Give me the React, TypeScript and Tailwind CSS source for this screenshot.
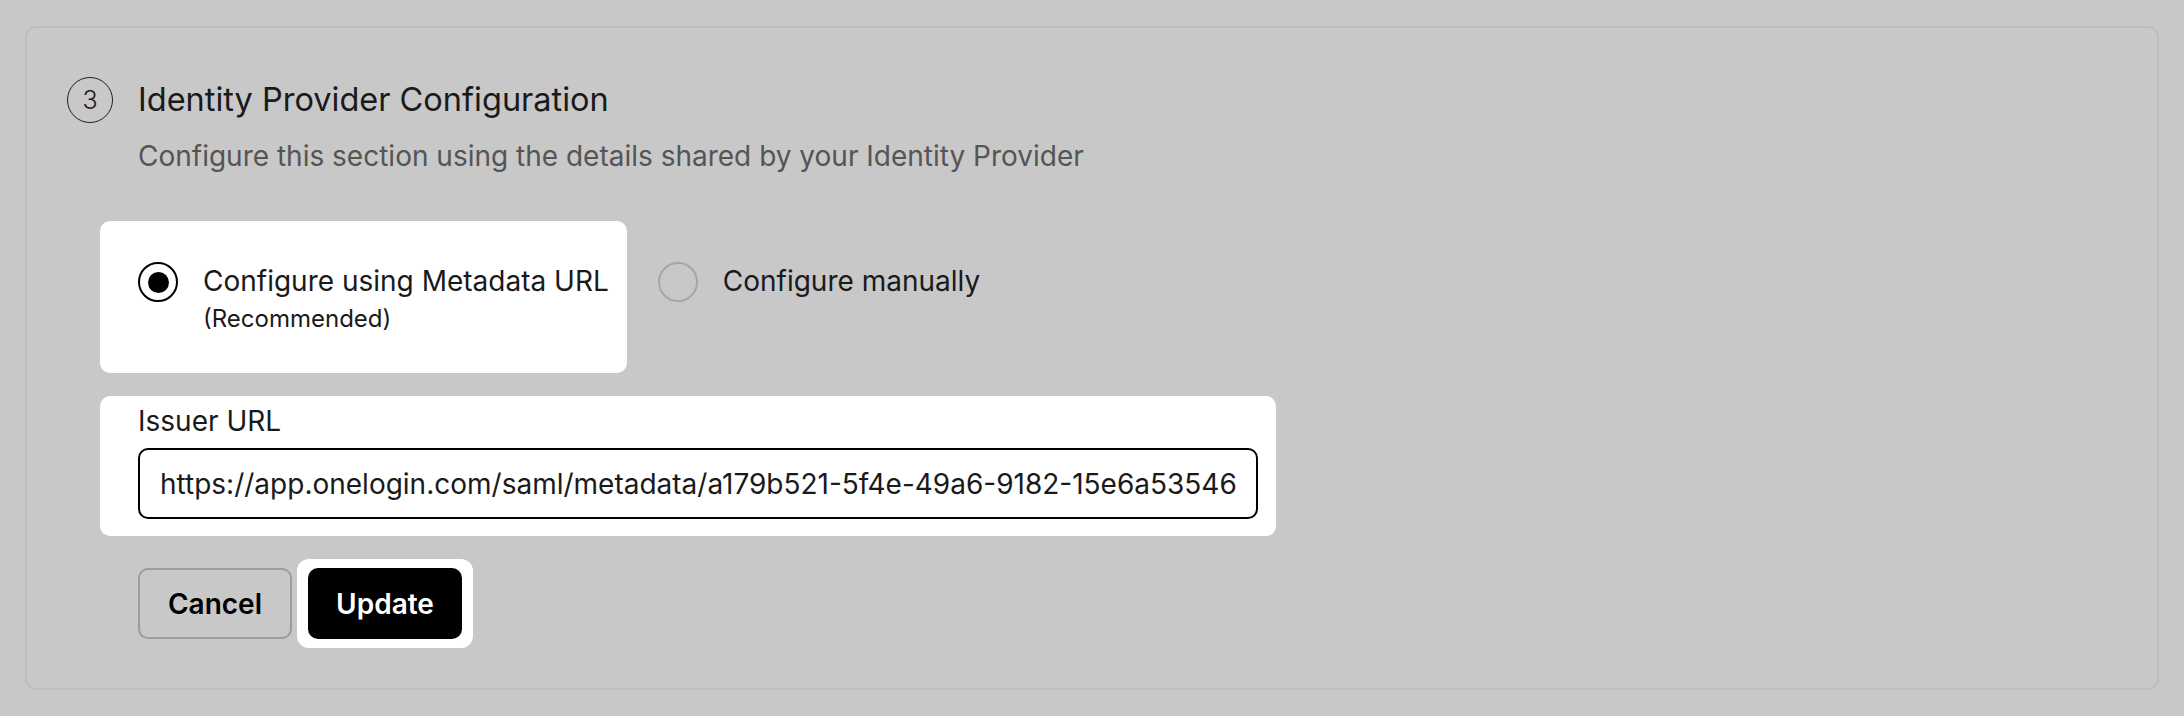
import React from "react";

const font = { fontFamily: "Inter, 'Noto Sans', sans-serif" };

export default function App() {
  return (
    <div
      className="w-[2184px] h-[716px] bg-[#c8c8c8] pt-[26px] pl-[25px] text-[#1a1a1a]"
      style={font}
    >
      <div className="w-[2134px] h-[664px] rounded-[11px] border-2 border-[#bdbdbd] pl-[40px] pt-[49px]">
        {/* Header */}
        <div className="flex items-center gap-[25px]">
          <div className="w-[46px] h-[46px] rounded-full border-[1.5px] border-[#1f1f1f] flex items-center justify-center text-[25px] leading-none font-light">
            3
          </div>
          <h2 className="text-[32.5px] leading-[40px] font-normal">
            Identity Provider Configuration
          </h2>
        </div>
        <div className="pl-[71px]">
          <p className="mt-[15px] text-[28px] leading-[36px] text-[#555555]">
            Configure this section using the details shared by your Identity
            Provider
          </p>

          {/* Radio options */}
          <div className="mt-[47px] -ml-[38px] flex items-start">
            <div className="bg-white rounded-[10px] pl-[38px] pr-[18px] pt-[41px] pb-[39px] flex items-start gap-[25px]">
              <div className="w-[40px] h-[40px] rounded-full border-[2.5px] border-black flex items-center justify-center shrink-0">
                <div className="w-[21px] h-[21px] rounded-full bg-black" />
              </div>
              <div className="flex flex-col">
                <span className="text-[28px] leading-[39px]">
                  Configure using Metadata URL
                </span>
                <span className="mt-[3px] text-[24px] leading-[30px]">
                  (Recommended)
                </span>
              </div>
            </div>
            <div className="ml-[31px] mt-[41px] flex items-start gap-[25px]">
              <div className="w-[40px] h-[40px] rounded-full border-[2px] border-[#a6a6a6] shrink-0" />
              <span className="text-[28px] leading-[39px]">
                Configure manually
              </span>
            </div>
          </div>

          {/* Issuer URL */}
          <div className="mt-[23px] -ml-[38px] w-[1176px] bg-white rounded-[10px] pl-[38px] pr-[18px] pt-[8px] pb-[17px]">
            <div className="text-[28px] leading-[34px]">Issuer URL</div>
            <input
              readOnly
              value="https://app.onelogin.com/saml/metadata/a179b521-5f4e-49a6-9182-15e6a5354621"
              className="mt-[10px] block h-[71px] w-[1120px] rounded-[10px] border-2 border-black px-[20px] text-[28px] text-[#1a1a1a] bg-white outline-none"
              style={font}
            />
          </div>

          {/* Buttons */}
          <div className="mt-[23px] flex items-center">
            <button className="h-[71px] w-[154px] rounded-[10px] border-2 border-[#9c9c9c] text-[28px] font-semibold text-black">
              Cancel
            </button>
            <div className="ml-[5px] bg-white rounded-[12px] px-[11px] py-[9px]">
              <button className="h-[71px] w-[154px] rounded-[10px] bg-black text-white text-[28px] font-semibold">
                Update
              </button>
            </div>
          </div>
        </div>
      </div>
    </div>
  );
}
